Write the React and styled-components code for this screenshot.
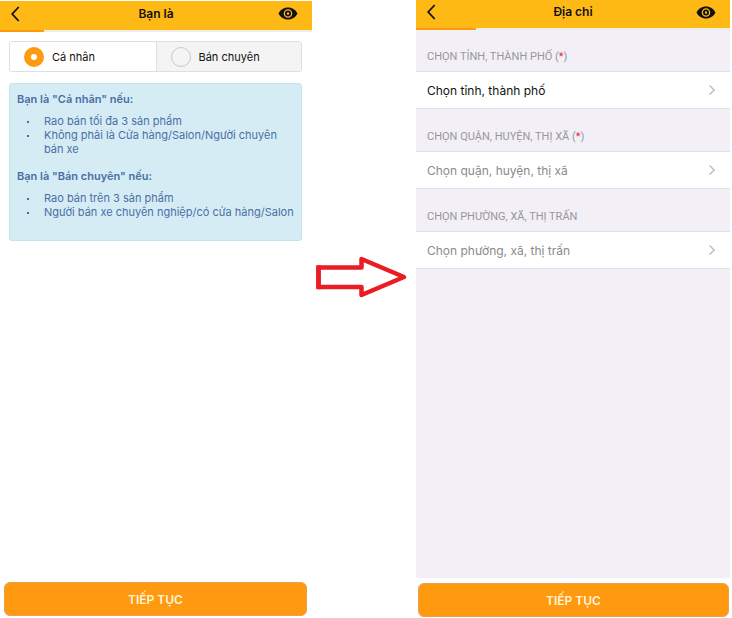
import React, { useState } from "react";
import styled, { createGlobalStyle } from "styled-components";

const GlobalStyle = createGlobalStyle`
  *, *::before, *::after { box-sizing: border-box; }
  body {
    margin: 0;
    background: #fff;
    color: #111;
    font-family: Inter, "Noto Sans", sans-serif;
    font-size: 11px;
  }
  button, select { font: inherit; }
`;

const Page = styled.main`
  display: grid;
  grid-template-columns: minmax(0, 312fr) 104px minmax(0, 314fr);
  min-height: 100vh;
  padding-right: 2px;
`;

const Screen = styled.section`
  display: flex;
  flex-direction: column;
  padding: ${(p) => (p.$inset ? "1px 0 2px" : "0 0 1px")};
`;

const Header = styled.header`
  display: grid;
  grid-template-columns: 48px 1fr 48px;
  align-items: center;
  height: ${(p) => p.$height}px;
  padding-bottom: 4px;
  background: #ffb915;
`;

const Title = styled.h1`
  margin: 0;
  font-size: 12px;
  line-height: 16px;
  font-weight: 600;
  text-align: center;
`;

const IconButton = styled.button`
  display: flex;
  justify-self: ${(p) => p.$side};
  margin: ${(p) => (p.$side === "start" ? "0 0 0 11px" : "0 14px 0 0")};
  padding: 0;
  border: 0;
  background: none;
  color: #111;
`;

const Track = styled.div`
  height: 2px;
  background: #f0ede8;
`;

const Progress = styled.div`
  width: ${(p) => p.$percent}%;
  height: 2px;
  background: #ff9a10;
`;

const Body = styled.div`
  flex: 1;
  margin-bottom: 5px;
  background: ${(p) => (p.$tinted ? "#f2eff7" : "#fff")};
  padding: ${(p) => (p.$tinted ? "0" : "9px 10px 0 9px")};
`;

const Segments = styled.div`
  display: grid;
  grid-template-columns: 1fr 1fr;
  height: 31px;
  border: 1px solid #dfdfdf;
  border-radius: 3px;
  overflow: hidden;
`;

const Segment = styled.label`
  display: flex;
  align-items: center;
  gap: 8px;
  padding-left: 14px;
  background: ${(p) => (p.$selected ? "#fff" : "#f4f4f4")};

  & + & {
    border-left: 1px solid #dfdfdf;
  }
`;

const Radio = styled.input`
  appearance: none;
  width: 20px;
  height: 20px;
  margin: 0;
  border: 1px solid #c8c8c8;
  border-radius: 50%;

  &:checked {
    border: 7px solid #ff9a10;
    background: #fff;
  }
`;

const Notice = styled.div`
  margin-top: 11px;
  min-height: 158px;
  padding: 8px 2px 0 7px;
  border: 1px solid #c4e3ea;
  border-radius: 3px;
  background: #d6ecf5;
  color: #4a6fa5;
`;

const NoticeTitle = styled.h2`
  margin: 0 0 8px;
  font-size: 11px;
  line-height: 14px;
  font-weight: 600;
`;

const NoticeList = styled.ul`
  margin: 0 0 13px;
  padding: 0;
  list-style: none;
`;

const NoticeItem = styled.li`
  display: grid;
  grid-template-columns: 17px 1fr;
  padding-left: 10px;
  line-height: 14px;

  &::before {
    content: "";
    width: 2px;
    height: 2px;
    margin-top: 7px;
    background: currentColor;
  }
`;

const Fields = styled.div`
  display: grid;
  gap: 1px;
`;

const Field = styled.div`
  display: flex;
  flex-direction: column;
`;

const FieldLabel = styled.label`
  height: 41px;
  padding: 20px 11px 0;
  color: #98979c;
  font-family: Roboto, Inter, sans-serif;
  font-size: 11px;
  line-height: 14px;
`;

const Required = styled.span`
  color: #dc3040;
`;

const Picker = styled.div`
  display: grid;
  grid-template-columns: 1fr 8px;
  align-items: center;
  height: 38px;
  padding: 0 14px 0 11px;
  border: solid #e2e0e6;
  border-width: 1px 0;
  background: #fff;
  color: #bcbcc0;
`;

const Select = styled.select`
  appearance: none;
  width: 100%;
  height: 36px;
  padding: 0;
  border: 0;
  background: none;
  color: ${(p) => (p.$active ? "#111" : "#8a8a8c")};
  font-size: 12px;
`;

const Submit = styled.button`
  height: 34px;
  margin: ${(p) => (p.$wide ? "0 1px 0 2px" : "0 5px 0 4px")};
  padding: 0;
  border: 1px solid #e8a252;
  border-radius: 6px;
  background: #ff9a10;
  color: #fff5dc;
  font-size: 12px;
  font-weight: 600;
`;

const Between = styled.div`
  padding: 255px 4px 0 0;
  text-align: center;
`;

function BackIcon() {
  return (
    <svg width="11" height="16" viewBox="0 0 11 16" fill="none" stroke="currentColor" strokeWidth="1.8" aria-hidden="true">
      <path d="M7.700 1 1.200 8l6.500 7" />
    </svg>
  );
}

function EyeIcon() {
  return (
    <svg width="20" height="13" viewBox="0 0 20 13" aria-hidden="true">
      <path fill="currentColor" fillRule="evenodd" d="M10 .5C5.500.5 2.300 3 .5 6.500 2.300 10 5.500 12.500 10 12.500s7.700-2.500 9.500-6C17.700 3 14.500.5 10 .5ZM10 2.200a4.300 4.300 0 1 1 0 8.600 4.300 4.300 0 0 1 0-8.600Z" />
      <circle cx="10" cy="6.500" r="2.100" fill="none" stroke="currentColor" strokeWidth="1.800" />
    </svg>
  );
}

function ChevronIcon() {
  return (
    <svg width="8" height="12" viewBox="0 0 8 12" fill="none" stroke="currentColor" strokeWidth="1.4" aria-hidden="true">
      <path d="m1.500 1.500 4.700 4.500-4.700 4.500" />
    </svg>
  );
}

function StepArrow() {
  return (
    <svg width="92" height="44" viewBox="0 0 92 44" fill="#fff" stroke="#ea1c24" strokeWidth="4.500" aria-hidden="true">
      <path d="M2.500 12.500h43V4L88 22 45.500 40v-8h-43Z" strokeLinejoin="round" />
      <path d="M2.500 32V12.500" strokeLinecap="square" />
    </svg>
  );
}

function TopBar({ title, height, percent }) {
  return (
    <>
      <Header $height={height}>
        <IconButton type="button" $side="start" aria-label="Quay lại">
          <BackIcon />
        </IconButton>
        <Title>{title}</Title>
        <IconButton type="button" $side="end" aria-label="Xem trước">
          <EyeIcon />
        </IconButton>
      </Header>
      <Track>
        <Progress $percent={percent} />
      </Track>
    </>
  );
}

const sellerTypes = ["Cá nhân", "Bán chuyên"];

const notices = [
  {
    title: 'Bạn là "Cá nhân" nếu:',
    items: ["Rao bán tối đa 3 sản phẩm", "Không phải là Cửa hàng/Salon/Người chuyên bán xe"],
  },
  {
    title: 'Bạn là "Bán chuyên" nếu:',
    items: ["Rao bán trên 3 sản phẩm", "Người bán xe chuyên nghiệp/có cửa hàng/Salon"],
  },
];

const fields = [
  { id: "city", label: "CHỌN TỈNH, THÀNH PHỐ", required: true, placeholder: "Chọn tỉnh, thành phố", active: true },
  { id: "district", label: "CHỌN QUẬN, HUYỆN, THỊ XÃ", required: true, placeholder: "Chọn quận, huyện, thị xã" },
  { id: "ward", label: "CHỌN PHƯỜNG, XÃ, THỊ TRẤN", placeholder: "Chọn phường, xã, thị trấn" },
];

export default function App() {
  const [seller, setSeller] = useState(sellerTypes[0]);

  return (
    <>
      <GlobalStyle />
      <Page>
        <Screen $inset>
          <TopBar title="Bạn là" height={29} percent={14} />
          <Body>
            <Segments role="radiogroup" aria-label="Bạn là">
              {sellerTypes.map((type) => (
                <Segment key={type} $selected={seller === type}>
                  <Radio type="radio" name="seller" checked={seller === type} onChange={() => setSeller(type)} />
                  {type}
                </Segment>
              ))}
            </Segments>
            <Notice>
              {notices.map((notice) => (
                <React.Fragment key={notice.title}>
                  <NoticeTitle>{notice.title}</NoticeTitle>
                  <NoticeList>
                    {notice.items.map((item) => (
                      <NoticeItem key={item}>{item}</NoticeItem>
                    ))}
                  </NoticeList>
                </React.Fragment>
              ))}
            </Notice>
          </Body>
          <Submit type="button">TIẾP TỤC</Submit>
        </Screen>
        <Between>
          <StepArrow />
        </Between>
        <Screen>
          <TopBar title="Địa chỉ" height={28} percent={19} />
          <Body $tinted>
            <Fields>
              {fields.map((field) => (
                <Field key={field.id}>
                  <FieldLabel htmlFor={field.id}>
                    {field.label}
                    {field.required && (
                      <>
                        {" "}(<Required>*</Required>)
                      </>
                    )}
                  </FieldLabel>
                  <Picker>
                    <Select id={field.id} $active={field.active}>
                      <option>{field.placeholder}</option>
                    </Select>
                    <ChevronIcon />
                  </Picker>
                </Field>
              ))}
            </Fields>
          </Body>
          <Submit type="button" $wide>TIẾP TỤC</Submit>
        </Screen>
      </Page>
    </>
  );
}
